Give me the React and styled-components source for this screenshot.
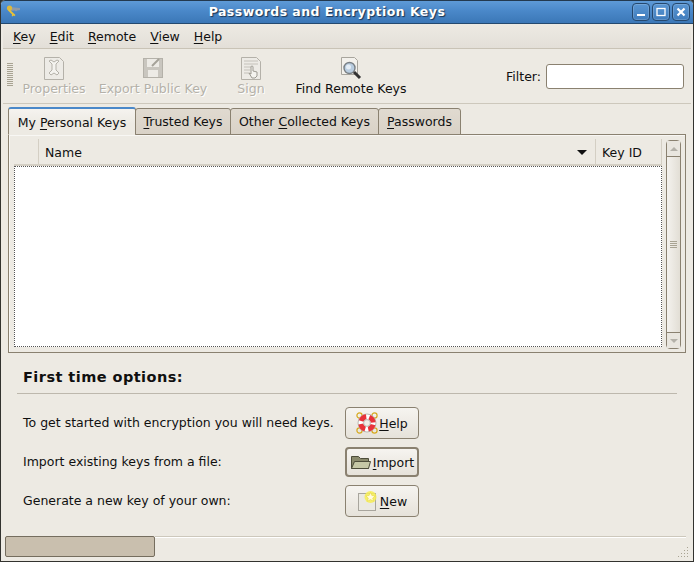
import React from "react";
import styled, { createGlobalStyle } from "styled-components";

const Global = createGlobalStyle`
  html, body { margin: 0; padding: 0; background: #2e3436; }
  body { font-family: "DejaVu Sans", sans-serif; font-size: 12.5px; color: #101010; }
`;

const Win = styled.div`
  width: 694px;
  height: 562px;
  box-sizing: border-box;
  display: flex;
  flex-direction: column;
  overflow: hidden;
  background: #edeae3;
  border-radius: 5px 5px 0 0;
  border-left: 1px solid #33332f;
  border-right: 1px solid #33332f;
  border-bottom: 1px solid #33332f;
`;

const TitleBar = styled.div`
  height: 24px;
  flex: none;
  margin: 0 -1px;
  box-sizing: border-box;
  display: flex;
  align-items: center;
  padding: 0 4px 1px 6px;
  background: linear-gradient(#5e9ad7, #4a88c9 45%, #3b77b7);
  border-top: 1px solid #23394f;
  border-bottom: 1px solid #24496f;
  border-radius: 5px 5px 0 0;
`;

const TitleText = styled.div`
  flex: 1;
  text-align: center;
  padding-left: 2px;
  color: #fff;
  font-weight: bold;
  font-size: 12.5px;
  letter-spacing: 0.45px;
  text-shadow: 1px 1px 1px #1c3350;
`;

const WinBtn = styled.div`
  width: 18px;
  height: 18px;
  margin-left: 2px;
  box-sizing: border-box;
  border: 1px solid #25486e;
  border-radius: 4px;
  box-shadow: inset 0 0 0 1px rgba(255, 255, 255, 0.16);
  background: linear-gradient(#5a96d3, #3f7cbc);
  display: flex;
  align-items: center;
  justify-content: center;
`;

const Content = styled.div`
  flex: 1;
  display: flex;
  flex-direction: column;
  min-height: 0;
  padding: 0 2px;
`;

const MenuBar = styled.div`
  height: 25px;
  flex: none;
  box-sizing: border-box;
  padding: 0 0 0 3px;
  display: flex;
  align-items: center;
  background: linear-gradient(#edeae3, #e3dfd8);
  border-bottom: 1px solid #c9c3b6;
`;

const MenuItem = styled.span`
  padding: 0 7px;
`;

const Mn = styled.span`
  text-decoration: underline;
  text-underline-offset: 2px;
  text-decoration-thickness: 1px;
`;

const ToolBar = styled.div`
  height: 55px;
  flex: none;
  box-sizing: border-box;
  display: flex;
  align-items: stretch;
  padding: 0 7px 0 3px;
  border-bottom: 1px solid #cdc8bc;
`;

const Grip = styled.div`
  width: 6px;
  height: 24px;
  margin: 14px 8px 0 1px;
  background: repeating-linear-gradient(#a8a392 0 1px, #edeae3 1px 2px);
`;

const ToolBtn = styled.div`
  display: flex;
  flex-direction: column;
  align-items: center;
  justify-content: flex-start;
  padding-top: 7px;
  width: ${(p) => p.$w}px;
  margin-left: ${(p) => p.$ml || 0}px;
  color: ${(p) => (p.$off ? "#b4b1a9" : "#101010")};
  text-shadow: ${(p) => (p.$off ? "1px 1px 0 #fff" : "none")};
  white-space: nowrap;
  line-height: 15px;
`;

const ToolIcon = styled.svg`
  width: 24px;
  height: 24px;
  margin-bottom: 1px;
  flex: none;
`;

const FilterArea = styled.div`
  margin-left: auto;
  display: flex;
  align-items: center;
  gap: 5px;
  padding-top: 1px;
`;

const FilterInput = styled.div`
  width: 138px;
  height: 25px;
  box-sizing: border-box;
  background: #fff;
  border: 1px solid #8a8170;
  border-radius: 3px;
`;

const TabRow = styled.div`
  display: flex;
  align-items: flex-end;
  height: 31px;
  flex: none;
  padding-left: 5px;
  position: relative;
  z-index: 1;
  margin-bottom: -1px;
`;

const Tab = styled.div`
  box-sizing: border-box;
  white-space: nowrap;
  text-align: center;
  width: ${(p) => p.$w}px;
  height: ${(p) => (p.$on ? 28 : 27)}px;
  line-height: ${(p) => (p.$on ? 27 : 26)}px;
  background: ${(p) => (p.$on ? "linear-gradient(#f5f3ef, #edeae3 60%)" : "linear-gradient(#e0dad0, #d9d2c7)")};
  border: 1px solid #8a8170;
  border-bottom-color: ${(p) => (p.$on ? "#edeae3" : "#8a8170")};
  border-top: ${(p) => (p.$on ? "2px solid #4a88c9" : "1px solid #8a8170")};
  border-radius: 3px 3px 0 0;
  margin-left: ${(p) => (p.$on ? 0 : -1)}px;
`;

const Notebook = styled.div`
  margin: 0 5px;
  height: 219px;
  flex: none;
  box-sizing: border-box;
  border: 1px solid #8a8170;
  padding: 4px 4px 5px 5px;
  display: flex;
  gap: 4px;
  box-shadow: inset 1px 1px 0 #f8f7f4;
`;

const Tree = styled.div`
  flex: 1;
  display: flex;
  flex-direction: column;
  min-width: 0;
`;

const TreeHead = styled.div`
  height: 27px;
  flex: none;
  box-sizing: border-box;
  display: flex;
  background: #edeae3;
  border-bottom: 2px solid #d4cfc4;
`;

const HeadCell = styled.div`
  box-sizing: border-box;
  padding: 1px 0 0 6px;
  display: flex;
  align-items: center;
  width: ${(p) => (p.$w ? `${p.$w}px` : "auto")};
  flex: ${(p) => (p.$w ? "none" : 1)};
  position: relative;
  border-right: 1px solid #d4cfc4;
`;

const SortArrow = styled.span`
  margin-left: auto;
  margin-right: 8px;
  width: 0;
  height: 0;
  border-left: 5px solid transparent;
  border-right: 5px solid transparent;
  border-top: 5px solid #111;
`;

const TreeBody = styled.div`
  flex: 1;
  background: #fff;
  border: 1px dotted #555;
`;

const Scroll = styled.div`
  width: 15px;
  flex: none;
  box-sizing: border-box;
  border: 1px solid #8a8170;
  border-radius: 4px;
  background: #e4e0d8;
  display: flex;
  flex-direction: column;
  margin-top: 1px;
  height: 209px;
`;

const ScrollEnd = styled.div`
  height: 15px;
  flex: none;
  display: flex;
  align-items: center;
  justify-content: center;
  background: #e9e6df;
  border-${(p) => (p.$up ? "bottom" : "top")}: 1px solid #8a8170;
`;

const Tri = styled.span`
  width: 0;
  height: 0;
  border-left: 4px solid transparent;
  border-right: 4px solid transparent;
  border-${(p) => (p.$up ? "bottom" : "top")}: 4px solid #b4b1a9;
`;

const Thumb = styled.div`
  flex: 1;
  display: flex;
  align-items: center;
  justify-content: center;
  background: linear-gradient(90deg, #f4f2ee, #e2ded5);
`;

const ThumbGrip = styled.div`
  width: 7px;
  height: 8px;
  background: repeating-linear-gradient(#a8a392 0 1px, transparent 1px 2px);
`;

const Options = styled.div`
  flex: 1;
  padding: 15px 14px 0 14px;
`;

const Heading = styled.div`
  font-weight: bold;
  font-size: 14.5px;
  line-height: 18px;
  padding: 0 0 7px 6px;
  border-bottom: 1px solid #bdb8ad;
  letter-spacing: 0.45px;
`;

const OptRows = styled.div`
  display: flex;
  flex-direction: column;
  padding: 13px 0 0 6px;
  gap: 8px;
`;

const OptRow = styled.div`
  display: flex;
  align-items: center;
`;

const OptLabel = styled.div`
  width: 322px;
  white-space: nowrap;
  padding-bottom: 2px;
`;

const Btn = styled.div`
  width: 74px;
  height: ${(p) => p.$h || 32}px;
  box-sizing: border-box;
  border: ${(p) => (p.$focus ? "2px" : "1px")} solid #8a8170;
  border-radius: 4px;
  background: linear-gradient(#f6f4f0, #e6e2da);
  display: flex;
  align-items: center;
  justify-content: center;
  gap: 1px;
`;

const BtnIcon = styled.svg`
  width: 22px;
  height: 22px;
  flex: none;
`;

const StatusBar = styled.div`
  height: 25px;
  flex: none;
  display: flex;
  align-items: flex-start;
  padding: 0 0 0 2px;
  position: relative;
`;

const Progress = styled.div`
  width: 150px;
  height: 21px;
  box-sizing: border-box;
  background: #c9bfae;
  border: 1px solid #756d5e;
  border-radius: 2px;
`;

const StatusFill = styled.div`
  flex: 1;
  height: 1px;
  background: #cdc8bc;
  margin-right: 5px;
  box-shadow: 0 1px 0 #fff;
`;

const ResizeGrip = styled.svg`
  position: absolute;
  right: 2px;
  bottom: 3px;
  width: 12px;
  height: 12px;
`;

const PageIcon = ({ children }) => (
  <ToolIcon viewBox="0 0 24 24">
    <path d="M2.5 1.5h15l4 4v18h-19z" fill="#edebe6" stroke="#b4b1a9" />
    {children}
  </ToolIcon>
);

const App = () => (
  <>
    <Global />
    <Win>
      <TitleBar>
        <svg width="16" height="16" viewBox="0 0 16 16">
          <path d="M4 3l10 1v2l-3 .5-1 1-1-1-5 .5z" fill="#8f9aa6" />
          <circle cx="3.5" cy="4" r="2.6" fill="#dcb93c" />
          <path d="M3 5l6.5 6-1.2 1.2-.8-.6-.8 1-1-.8.4-1.2L2 6.5z" fill="#e8c236" />
        </svg>
        <TitleText>Passwords and Encryption Keys</TitleText>
        <WinBtn>
          <svg width="10" height="10" viewBox="0 0 10 10"><rect x="1" y="7" width="8" height="2" fill="#fff" /></svg>
        </WinBtn>
        <WinBtn>
          <svg width="10" height="10" viewBox="0 0 10 10"><rect x="1" y="1.5" width="8" height="7" fill="none" stroke="#fff" strokeWidth="1.3" /></svg>
        </WinBtn>
        <WinBtn>
          <svg width="10" height="10" viewBox="0 0 10 10"><path d="M1.5 1.5l7 7M8.5 1.5l-7 7" stroke="#fff" strokeWidth="2.2" /></svg>
        </WinBtn>
      </TitleBar>
      <Content>
        <MenuBar>
          <MenuItem><Mn>K</Mn>ey</MenuItem>
          <MenuItem><Mn>E</Mn>dit</MenuItem>
          <MenuItem><Mn>R</Mn>emote</MenuItem>
          <MenuItem><Mn>V</Mn>iew</MenuItem>
          <MenuItem><Mn>H</Mn>elp</MenuItem>
        </MenuBar>
        <ToolBar>
          <Grip />
          <ToolBtn $off $w={66}>
            <PageIcon>
              <path d="M7 5l3 3v6l-3 3 2 2 3-2 3 2 2-2-3-3V8l3-3-2-1-3 2-3-2z" fill="#f4f3ef" stroke="#b4b1a9" />
            </PageIcon>
            Properties
          </ToolBtn>
          <ToolBtn $off $w={110} $ml={11}>
            <ToolIcon viewBox="0 0 24 24">
              <rect x="2.5" y="2.5" width="19" height="19" fill="#c9c6bf" stroke="#b4b1a9" />
              <rect x="6" y="3" width="12" height="8" fill="#edebe6" />
              <rect x="7" y="14" width="10" height="7" fill="#edebe6" />
              <path d="M11 10l7-7" stroke="#a5a299" strokeWidth="2" />
            </ToolIcon>
            Export Public Key
          </ToolBtn>
          <ToolBtn $off $w={40} $ml={23}>
            <PageIcon>
              <path d="M5 5h14M5 8h14M5 11h7M5 14h6M5 17h5" stroke="#c4c1ba" />
              <path d="M12 11a1 1 0 0 1 2 0v4l4 1v4l-2 2h-3l-3-5 2 1z" fill="#f4f3ef" stroke="#9d9a92" />
            </PageIcon>
            Sign
          </ToolBtn>
          <ToolBtn $w={116} $ml={22}>
            <ToolIcon viewBox="0 0 24 24">
              <path d="M2.5 1.5h13l3 3v14h-16z" fill="#f3f1ec" stroke="#a8a59d" />
              <circle cx="10.5" cy="12" r="5.5" fill="#b9cde0" stroke="#7a8085" strokeWidth="1.4" />
              <circle cx="9.5" cy="11" r="2.5" fill="#e4edf5" />
              <path d="M15 16l6 6" stroke="#333" strokeWidth="3" />
            </ToolIcon>
            Find Remote Keys
          </ToolBtn>
          <FilterArea>
            Filter:
            <FilterInput />
          </FilterArea>
        </ToolBar>
        <TabRow>
          <Tab $on $w={128}>My <Mn>P</Mn>ersonal Keys</Tab>
          <Tab $w={96}><Mn>T</Mn>rusted Keys</Tab>
          <Tab $w={149}>Other <Mn>C</Mn>ollected Keys</Tab>
          <Tab $w={83}><Mn>P</Mn>asswords</Tab>
        </TabRow>
        <Notebook>
          <Tree>
            <TreeHead>
              <HeadCell $w={25} />
              <HeadCell>Name<SortArrow /></HeadCell>
              <HeadCell $w={66}>Key ID</HeadCell>
            </TreeHead>
            <TreeBody />
          </Tree>
          <Scroll>
            <ScrollEnd $up><Tri $up /></ScrollEnd>
            <Thumb><ThumbGrip /></Thumb>
            <ScrollEnd><Tri /></ScrollEnd>
          </Scroll>
        </Notebook>
        <Options>
          <Heading>First time options:</Heading>
          <OptRows>
            <OptRow>
              <OptLabel>To get started with encryption you will need keys.</OptLabel>
              <Btn>
                <BtnIcon viewBox="0 0 22 22">
                  <g fill="none" stroke="#d6a91f" strokeWidth="1.2">
                    <circle cx="3.5" cy="3.5" r="2.6" />
                    <circle cx="18.5" cy="3.5" r="2.6" />
                    <circle cx="3.5" cy="18.5" r="2.6" />
                    <circle cx="18.5" cy="18.5" r="2.6" />
                  </g>
                  <circle cx="11" cy="11" r="9" fill="#fff" stroke="#a8a8a2" strokeWidth="0.8" />
                  <circle cx="11" cy="11" r="6.2" fill="none" stroke="#e8333a" strokeWidth="5" strokeDasharray="6.6 3.14" strokeDashoffset="-1.6" />
                  <circle cx="11" cy="11" r="3.4" fill="#f0ede6" stroke="#a8a8a2" strokeWidth="0.8" />
                </BtnIcon>
                <span><Mn>H</Mn>elp</span>
              </Btn>
            </OptRow>
            <OptRow>
              <OptLabel>Import existing keys from a file:</OptLabel>
              <Btn $focus $h={30}>
                <BtnIcon viewBox="0 0 22 22">
                  <path d="M1.5 5.5h7l2 2h8v10h-17z" fill="#8a8a6c" stroke="#4d4d3a" />
                  <path d="M1.5 17.5l3-7h16l-2 7z" fill="#c6c8a6" stroke="#4d4d3a" />
                </BtnIcon>
                <span><Mn>I</Mn>mport</span>
              </Btn>
            </OptRow>
            <OptRow>
              <OptLabel>Generate a new key of your own:</OptLabel>
              <Btn>
                <BtnIcon viewBox="0 0 22 22">
                  <rect x="1.5" y="3.5" width="17" height="17" fill="#ebe9e2" stroke="#a8a59d" />
                  <circle cx="13.5" cy="7" r="6" fill="#f7ef55" opacity="0.85" />
                  <path d="M13.5 2.5l1.4 3 3.3.3-2.5 2.2.8 3.2-3-1.7-3 1.7.8-3.2-2.5-2.2 3.3-.3z" fill="#fffbe0" stroke="#e6d52a" strokeWidth="0.5" />
                </BtnIcon>
                <span><Mn>N</Mn>ew</span>
              </Btn>
            </OptRow>
          </OptRows>
        </Options>
        <StatusBar>
          <Progress />
          <StatusFill />
          <ResizeGrip viewBox="0 0 12 12">
            <path d="M10 1h1v1h-1zM10 4h1v1h-1zM7 4h1v1H7zM10 7h1v1h-1zM7 7h1v1H7zM4 7h1v1H4zM10 10h1v1h-1zM7 10h1v1H7zM4 10h1v1H4zM1 10h1v1H1z" fill="#a8a392" />
          </ResizeGrip>
        </StatusBar>
      </Content>
    </Win>
  </>
);

export default App;
